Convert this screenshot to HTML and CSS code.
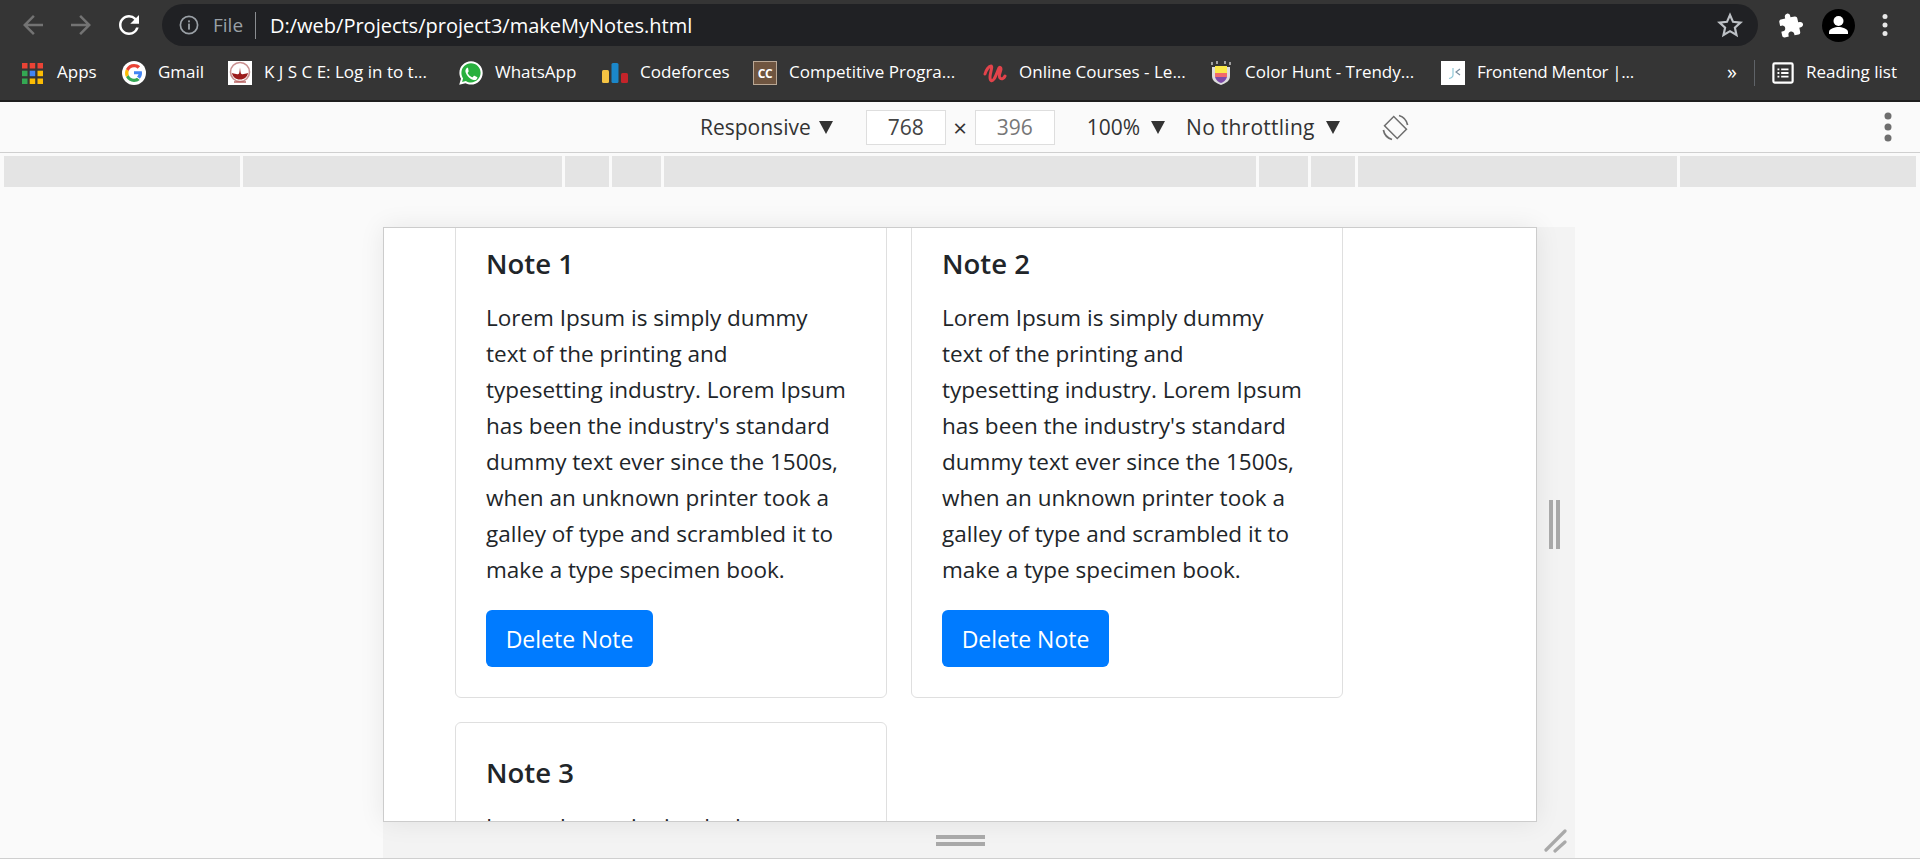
FILE: index.html
```html
<!DOCTYPE html>
<html lang="en">
<head>
    <meta charset="UTF-8">
    <meta name="viewport" content="width=device-width, initial-scale=1.0">
    <title>makeMyNotes.html</title>
    <link rel="stylesheet" href="styles.css">
</head>
<body>
    <header class="toolbar">
        <svg class="nav-icon dim" viewBox="0 0 24 24"><path d="M20 11H7.830l5.590-5.590L12 4l-8 8 8 8 1.410-1.410L7.830 13H20v-2z"/></svg>
        <svg class="nav-icon dim" viewBox="0 0 24 24"><path d="M12 4l-1.410 1.410L16.170 11H4v2h12.170l-5.580 5.590L12 20l8-8z"/></svg>
        <svg class="nav-icon" viewBox="0 0 24 24"><path d="M17.650 6.350A7.958 7.958 0 0012 4c-4.420 0-7.990 3.580-7.990 8s3.570 8 7.990 8c3.730 0 6.840-2.550 7.730-6h-2.080A5.990 5.990 0 0112 18c-3.310 0-6-2.690-6-6s2.690-6 6-6c1.660 0 3.140.69 4.220 1.780L13 11h7V4l-2.350 2.350z"/></svg>
        <div class="omnibox">
            <svg class="info-icon" viewBox="0 0 20 20"><circle cx="10" cy="10" r="8.600" fill="none" stroke="#9aa0a6" stroke-width="1.700"/><rect x="9.100" y="8.600" width="1.800" height="6" fill="#9aa0a6"/><rect x="9.100" y="5.400" width="1.800" height="1.900" fill="#9aa0a6"/></svg>
            <span class="scheme">File</span>
            <span class="url">D:/web/Projects/project3/makeMyNotes.html</span>
            <svg class="star-icon" viewBox="0 0 24 24"><path d="M12 2.800l2.800 6.300 6.900.7-5.200 4.600 1.500 6.800-6-3.500-6 3.500 1.500-6.800-5.200-4.600 6.900-.7z" fill="none" stroke="#bdc1c6" stroke-width="2"/></svg>
        </div>
        <svg class="puzzle-icon" viewBox="0 0 24 24"><path transform="rotate(-12 12 12)" d="M20.500 11H19V7c0-1.100-.9-2-2-2h-4V3.500C13 2.120 11.880 1 10.500 1S8 2.120 8 3.500V5H4c-1.100 0-1.990.9-1.990 2v3.800H3.500c1.490 0 2.700 1.210 2.700 2.700s-1.210 2.700-2.700 2.700H2V20c0 1.100.9 2 2 2h3.800v-1.500c0-1.490 1.210-2.700 2.700-2.700 1.490 0 2.700 1.210 2.700 2.700V22H17c1.100 0 2-.9 2-2v-4h1.500c1.380 0 2.500-1.120 2.500-2.500S21.880 11 20.500 11z"/></svg>
        <svg class="avatar-icon" viewBox="0 0 33 33"><circle cx="16.500" cy="16.500" r="16.500" fill="#000"/><circle cx="16.500" cy="12" r="5" fill="#fff"/><path d="M7 25v-2c0-3.400 6.300-5 9.500-5s9.500 1.600 9.500 5v2z" fill="#fff"/></svg>
        <svg class="menu-icon" viewBox="0 0 6 24"><circle cx="3" cy="3.500" r="2.500"/><circle cx="3" cy="12" r="2.500"/><circle cx="3" cy="20.500" r="2.500"/></svg>
    </header>

    <nav class="bookmarks">
        <div class="bookmark-list">
            <a class="bookmark">
                <svg class="favicon apps" viewBox="0 0 21 21"><rect width="5.500" height="5.500" fill="#ea4335"/><rect x="7.700" width="5.500" height="5.500" fill="#ea4335"/><rect x="15.500" width="5.500" height="5.500" fill="#ea4335"/><rect y="7.700" width="5.500" height="5.500" fill="#34a853"/><rect x="7.700" y="7.700" width="5.500" height="5.500" fill="#4285f4"/><rect x="15.500" y="7.700" width="5.500" height="5.500" fill="#fbbc04"/><rect y="15.500" width="5.500" height="5.500" fill="#34a853"/><rect x="7.700" y="15.500" width="5.500" height="5.500" fill="#fbbc04"/><rect x="15.500" y="15.500" width="5.500" height="5.500" fill="#fbbc04"/></svg>
                Apps
            </a>
            <a class="bookmark">
                <svg class="favicon" viewBox="0 0 24 24"><circle cx="12" cy="12" r="12" fill="#fff"/><path d="M12 10.200h7.800c.1.600.2 1.200.2 1.900 0 2.300-.8 4.300-2.200 5.700l-2.800-2.200c.8-.6 1.300-1.400 1.500-2.400H12z" fill="#4285f4"/><path d="M6.700 14c.7 2.100 2.800 3.700 5.300 3.700 1.200 0 2.200-.3 3-.9l2.800 2.200C16.300 20.200 14.300 21 12 21c-3.500 0-6.500-2-8-4.900z" fill="#34a853"/><path d="M6.700 14c-.4-1.300-.4-2.700 0-4L4 7.900c-1.300 2.600-1.300 5.600 0 8.200z" fill="#fbbc04"/><path d="M12 6.300c1.400 0 2.600.5 3.600 1.400l2.500-2.500C16.500 3.800 14.400 3 12 3 8.500 3 5.500 5 4 7.900L6.700 10c.7-2.100 2.800-3.700 5.300-3.700z" fill="#ea4335"/></svg>
                Gmail
            </a>
            <a class="bookmark">
                <svg class="favicon" viewBox="0 0 24 24"><rect width="24" height="24" fill="#fff"/><circle cx="12" cy="11" r="9.500" fill="none" stroke="#c98f8f" stroke-width="1.600"/><path d="M4 12c3 1 5 1.500 6.500 1 1-.4 1-2.500 1.500-6.500.5 4 .5 6.100 1.500 6.500 1.500.5 3.500 0 6.500-1-.8 4-3.500 6.500-8 6.500s-7.200-2.500-8-6.500z" fill="#9c1c1c"/><path d="M6 21h12" stroke="#b35a5a" stroke-width="1.400"/></svg>
                K J S C E: Log in to t...
            </a>
            <a class="bookmark">
                <svg class="favicon" viewBox="0 0 24 24"><path d="M12 .3C5.600.3.400 5.500.400 11.900c0 2.100.6 4.100 1.600 5.800L.2 23.800l6.300-1.600c1.600.9 3.500 1.400 5.500 1.400 6.400 0 11.700-5.300 11.700-11.700S18.400.3 12 .3z" fill="#fff"/><path d="M12 2.300c-5.300 0-9.600 4.300-9.600 9.600 0 2 .6 3.800 1.700 5.400l-1 3.600 3.800-1c1.500 1 3.300 1.500 5.100 1.500 5.300 0 9.600-4.300 9.600-9.600S17.300 2.300 12 2.300z" fill="#29b03f"/><path d="M9 6.700c-.5-.1-1 0-1.400.5-.6.600-1.200 1.500-1.200 2.900 0 1.700 1.200 3.400 1.400 3.600.2.300 2.400 3.800 5.900 5 1.900.6 3 .3 3.700-.3.700-.6 1.100-1.500 1-2.100-.1-.3-2.800-1.600-3-1.600-.3-.1-.5 0-.7.300l-1 1.200c-.2.200-.4.200-.7.100-1.600-.7-3.300-2-4.300-4-.1-.3 0-.4.100-.6l.8-1.100c.1-.2.100-.4 0-.6z" fill="#fff"/></svg>
                WhatsApp
            </a>
            <a class="bookmark">
                <svg class="favicon wide" viewBox="0 0 26 20"><rect y="7" width="7" height="13" rx="1.500" fill="#f6c443"/><rect x="9.500" width="7" height="20" rx="1.500" fill="#1b87c9"/><rect x="19" y="10" width="7" height="10" rx="1.500" fill="#c4242a"/></svg>
                Codeforces
            </a>
            <a class="bookmark">
                <span class="cc-icon">CC</span>
                Competitive Progra...
            </a>
            <a class="bookmark">
                <svg class="favicon" viewBox="0 0 24 24"><path d="M2 13c1-4 4-8 6-8s-1 7-1 11 2 5 4 2 4-9 5-11c.5-1 2-1 2 1s-3 7-1 9 4 0 5-2" fill="none" stroke="#e2434b" stroke-width="3" stroke-linecap="round"/></svg>
                Online Courses - Le...
            </a>
            <a class="bookmark">
                <svg class="favicon" viewBox="0 0 24 24"><path d="M3 6h18v9c0 5-4 7-9 9-5-2-9-4-9-9z" fill="#ddd"/><path d="M6 5h12v7H6z" fill="#fbe947"/><path d="M6 12h12v4H6z" fill="#f26a6a"/><path d="M6 16h12c-1 3.500-3.500 5-6 6-2.500-1-5-2.500-6-6z" fill="#7d4ba8"/><path d="M3 1v3M8 0v3M16 0v3M21 1v3" stroke="#bbb" stroke-width="1.600"/></svg>
                Color Hunt - Trendy...
            </a>
            <a class="bookmark tight">
                <svg class="favicon" viewBox="0 0 24 24"><rect width="24" height="24" fill="#fff"/><path d="M12 7v7c0 2-1.500 3-4 3.500" fill="none" stroke="#8fc8d8" stroke-width="1.200"/><path d="M19 8l-4 3 4 3" fill="none" stroke="#7a8fa0" stroke-width="1.200"/></svg>
                Frontend Mentor |...
            </a>
        </div>
        <span class="more">»</span>
        <span class="bar-divider"></span>
        <a class="bookmark reading">
            <svg class="favicon reading-icon" viewBox="0 0 24 24"><rect x="1.500" y="1.500" width="21" height="21" rx="1.500" fill="none" stroke="#fff" stroke-width="2.400"/><path d="M6 7h2v2H6zM6 11h2v2H6zM6 15h2v2H6zM10 7h8v2h-8zM10 11h8v2h-8zM10 15h8v2h-8z" fill="#fff"/></svg>
            Reading list
        </a>
    </nav>

    <div class="device-bar">
        <span class="device-label">Responsive</span><span class="caret"></span>
        <span class="size-box">768</span>
        <span class="times">×</span>
        <span class="size-box muted">396</span>
        <span class="device-label zoom-label">100%</span><span class="caret zoom-caret"></span>
        <span class="device-label throttle-label">No throttling</span><span class="caret throttle-caret"></span>
        <svg class="rotate-icon" viewBox="0 0 27 27"><rect x="7" y="4.500" width="13" height="18" transform="rotate(-45 13.500 13.500)" fill="none" stroke="#6e6e6e" stroke-width="1.500"/><path d="M17 1.500a12.500 12.500 0 018.600 9.500M10 25.500a12.500 12.500 0 01-8.600-9.500" fill="none" stroke="#6e6e6e" stroke-width="1.700"/></svg>
        <svg class="device-menu" viewBox="0 0 8 30"><circle cx="4" cy="4" r="3.500"/><circle cx="4" cy="15" r="3.500"/><circle cx="4" cy="26" r="3.500"/></svg>
    </div>

    <div class="ruler">
        <span class="query q-outer"></span>
        <span class="query q-wide"></span>
        <span class="query q-a"></span>
        <span class="query q-b"></span>
        <span class="query q-mid"></span>
        <span class="query q-b"></span>
        <span class="query q-a"></span>
        <span class="query q-wide"></span>
        <span class="query q-outer"></span>
    </div>

    <main class="stage">
        <div class="device">
            <div class="viewport">
                <div class="notes">
                    <section class="card">
                        <h5 class="card-title">Note 1</h5>
                        <p class="card-text">Lorem Ipsum is simply dummy<br>text of the printing and<br>typesetting industry. Lorem Ipsum<br>has been the industry's standard<br>dummy text ever since the 1500s,<br>when an unknown printer took a<br>galley of type and scrambled it to<br>make a type specimen book.</p>
                        <button class="btn">Delete Note</button>
                    </section>
                    <section class="card">
                        <h5 class="card-title">Note 2</h5>
                        <p class="card-text">Lorem Ipsum is simply dummy<br>text of the printing and<br>typesetting industry. Lorem Ipsum<br>has been the industry's standard<br>dummy text ever since the 1500s,<br>when an unknown printer took a<br>galley of type and scrambled it to<br>make a type specimen book.</p>
                        <button class="btn">Delete Note</button>
                    </section>
                    <section class="card">
                        <h5 class="card-title">Note 3</h5>
                        <p class="card-text">Lorem Ipsum is simply dummy</p>
                    </section>
                </div>
            </div>
            <div class="handle-right"><span></span><span></span></div>
            <div class="handle-bottom"><span></span><span></span></div>
            <svg class="handle-corner" viewBox="0 0 24 24"><path d="M2 21L21 2M11 22l10-9" fill="none" stroke="#a9a9a9" stroke-width="3.200" stroke-linecap="round"/></svg>
        </div>
    </main>
</body>
</html>
```

FILE: styles.css
```css
* {
    box-sizing: border-box;
}
html, body {
    height: 100%;
}
body {
    margin: 0;
    overflow: hidden;
    display: flex;
    flex-direction: column;
    background: #fff;
    font-family: "Open Sans", "Noto Sans", sans-serif;
    color: #212529;
}

/* browser chrome */
.toolbar {
    height: 50px;
    flex: none;
    display: flex;
    align-items: center;
    padding-left: 18px;
    background: #353535;
}
.nav-icon {
    width: 30px;
    height: 30px;
    fill: #fff;
    margin-right: 18px;
}
.nav-icon.dim {
    fill: #737373;
}
.omnibox {
    width: 1596px;
    height: 42px;
    padding: 0 15px 0 17px;
    display: flex;
    align-items: center;
    border-radius: 21px;
    background: #202124;
    font-size: 20px;
}
.info-icon {
    width: 20px;
    height: 20px;
}
.scheme {
    width: 43px;
    margin-left: 14px;
    height: 27px;
    line-height: 26px;
    font-size: 19px;
    color: #9aa0a6;
    border-right: 1px solid #8a8d91;
}
.url {
    margin-left: 14px;
    color: #fff;
    flex: 1;
}
.star-icon {
    width: 26px;
    height: 26px;
}
.puzzle-icon {
    width: 26px;
    height: 26px;
    margin-left: 20px;
    fill: #fff;
}
.avatar-icon {
    width: 33px;
    height: 33px;
    margin-left: 18px;
}
.menu-icon {
    width: 6px;
    height: 24px;
    margin-left: 27px;
    fill: #e8e8e8;
}

.bookmarks {
    height: 52px;
    flex: none;
    display: flex;
    align-items: center;
    padding: 0 0 7px 22px;
    background: #353535;
    border-bottom: 2px solid #1e1e1e;
    color: #fff;
    font-size: 17px;
}
.bookmark-list {
    flex: 1;
    display: grid;
    grid-template-columns: 100px 106px 231px 143px 151px 230px 226px 232px 1fr;
    align-items: center;
}
.bookmark {
    display: flex;
    align-items: center;
    gap: 12px;
    white-space: nowrap;
}
.bookmark.tight {
    letter-spacing: -0.300px;
}
.favicon, .cc-icon {
    width: 24px;
    height: 24px;
    flex: none;
    margin-top: 3px;
}
.favicon.apps {
    width: 21px;
    height: 21px;
    margin-right: 2px;
}
.favicon.wide {
    width: 26px;
    height: 20px;
}
.favicon.reading-icon {
    width: 22px;
    height: 22px;
}
.cc-icon {
    display: flex;
    align-items: center;
    justify-content: center;
    background: #6f5540;
    border: 1px solid #b9a795;
    color: #fff;
    font-size: 12px;
    font-weight: 700;
    letter-spacing: -0.500px;
}
.more {
    font-size: 20px;
    margin-right: 17px;
}
.bar-divider {
    width: 1px;
    height: 26px;
    margin-top: 3px;
    background: #5f6368;
    margin-right: 17px;
}
.reading {
    width: 148px;
}

/* device mode toolbar */
.device-bar {
    height: 51px;
    flex: none;
    display: flex;
    align-items: center;
    padding-left: 700px;
    background: #fafafa;
    border-bottom: 1px solid #cfcfcf;
    font-size: 21px;
    color: #333;
}
.caret {
    width: 0;
    height: 0;
    margin-left: 8px;
    border-left: 7.500px solid transparent;
    border-right: 7.500px solid transparent;
    border-top: 13px solid #333;
}
.zoom-caret {
    margin-left: 11px;
}
.throttle-caret {
    margin-left: 11px;
}
.size-box {
    width: 80px;
    height: 35px;
    margin-left: 33px;
    background: #fff;
    border: 1px solid #dedede;
    text-align: center;
    line-height: 33px;
    color: #444;
}
.size-box.muted {
    margin-left: 0;
    color: #777;
}
.times {
    width: 29px;
    text-align: center;
    font-size: 24px;
}
.zoom-label {
    margin-left: 32px;
}
.throttle-label {
    margin-left: 21px;
    letter-spacing: 0.250px;
}
.rotate-icon {
    width: 27px;
    height: 27px;
    margin-left: 42px;
}
.device-menu {
    width: 8px;
    height: 30px;
    margin-left: 475px;
    fill: #6e6e6e;
}

/* media query bars */
.ruler {
    height: 74px;
    flex: none;
    display: flex;
    gap: 3px;
    padding: 3px 4px 0;
    background: #fafafa;
}
.query {
    height: 31px;
    background: #e4e4e4;
}
.q-outer {
    width: 236px;
}
.q-wide {
    width: 319px;
}
.q-a {
    width: 44px;
}
.q-b {
    width: 49px;
}
.q-mid {
    width: 593px;
}

/* emulated page */
.stage {
    height: 632px;
    flex: none;
    padding-left: 383px;
    background: #fafafa;
    border-bottom: 1px solid #cfcfcf;
}
.device {
    width: 1192px;
    height: 631px;
    display: grid;
    grid-template-columns: 1154px 38px;
    grid-template-rows: 595px 36px;
    background: #f3f3f3;
}
.viewport {
    overflow: hidden;
    background: #fff;
    border: 1px solid #ccc;
    box-shadow: 0 0 24px rgba(0, 0, 0, 0.08);
}
.notes {
    margin-top: -15px;
    padding-left: 71px;
    display: grid;
    grid-template-columns: repeat(2, 432px);
    gap: 24px;
}
.card {
    padding: 32px 30px 30px;
    background: #fff;
    border: 1px solid #dfdfdf;
    border-radius: 6px;
}
.card-title {
    margin: 0 0 18px;
    font-size: 27.500px;
    font-weight: 600;
    line-height: 36px;
}
.card-text {
    margin: 0 0 22px;
    font-size: 22.500px;
    line-height: 36px;
    white-space: nowrap;
}
.btn {
    height: 57px;
    width: 167px;
    padding: 0;
    border: none;
    border-radius: 6px;
    background: #007bff;
    color: #fff;
    font-family: inherit;
    font-size: 23px;
}

/* resize handles */
.handle-right {
    display: flex;
    gap: 3px;
    align-items: center;
    padding-left: 12px;
}
.handle-right span {
    width: 4px;
    height: 49px;
    background: #a9a9a9;
}
.handle-bottom {
    display: flex;
    flex-direction: column;
    gap: 3px;
    align-items: center;
    justify-content: center;
}
.handle-bottom span {
    width: 49px;
    height: 4px;
    background: #a9a9a9;
}
.handle-corner {
    width: 24px;
    height: 24px;
    margin: 7px 0 0 7px;
}
```
